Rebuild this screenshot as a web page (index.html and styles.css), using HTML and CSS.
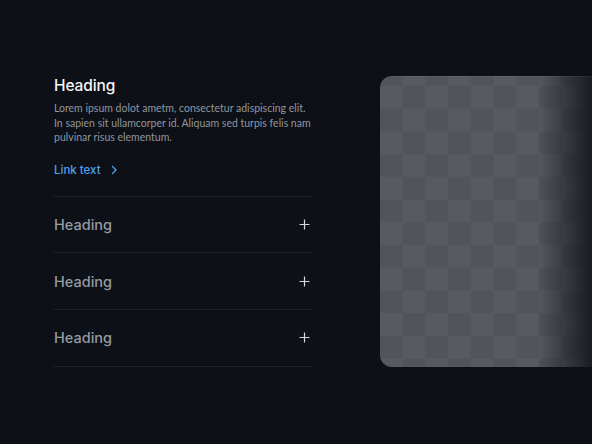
FILE: index.html
```html
<!DOCTYPE html>
<html>
<head>
<meta charset="utf-8">
<link rel="stylesheet" href="styles.css">
</head>
<body>
<main class="section">
  <div class="content">
    <h2 class="title">Heading</h2>
    <p class="text">Lorem ipsum dolot ametm, consectetur adispiscing elit. In sapien sit ullamcorper id. Aliquam sed turpis felis nam pulvinar risus elementum.</p>
    <a class="link" href="#">Link text
      <svg class="chev" width="8" height="10" viewBox="0 0 8 10"><path d="M2.5 1.5 L6 5 L2.5 8.5" fill="none" stroke="currentColor" stroke-width="1.3" stroke-linecap="round" stroke-linejoin="round"/></svg>
    </a>
    <ul class="list">
      <li class="item"><span>Heading</span><svg class="plus" width="11" height="11" viewBox="0 0 11 11"><path d="M5.5 0.5 V10.5 M0.5 5.5 H10.5" stroke="currentColor" stroke-width="1.2"/></svg></li>
      <li class="item"><span>Heading</span><svg class="plus" width="11" height="11" viewBox="0 0 11 11"><path d="M5.5 0.5 V10.5 M0.5 5.5 H10.5" stroke="currentColor" stroke-width="1.2"/></svg></li>
      <li class="item"><span>Heading</span><svg class="plus" width="11" height="11" viewBox="0 0 11 11"><path d="M5.5 0.5 V10.5 M0.5 5.5 H10.5" stroke="currentColor" stroke-width="1.2"/></svg></li>
    </ul>
  </div>
  <div class="media"></div>
</main>
</body>
</html>
```
FILE: styles.css
```css
* { box-sizing: border-box; }
html, body { margin: 0; padding: 0; }
body {
  background: #0d1017;
  font-family: Inter, "Noto Sans", sans-serif;
  width: 592px;
  height: 444px;
  overflow: hidden;
}
.section {
  display: flex;
  align-items: flex-start;
  padding: 76px 0 0 54px;
}
.content {
  width: 258px;
  flex: none;
}
.title {
  margin: 0;
  font-size: 15.5px;
  line-height: 20px;
  font-weight: 500;
  color: #f4f5f7;
  letter-spacing: -0.1px;
}
.text {
  margin: 5px 0 0;
  font-family: Lato, "Noto Sans", sans-serif;
  font-size: 10.5px;
  line-height: 14.5px;
  color: #92969e;
}
.link {
  display: flex;
  align-items: center;
  gap: 9px;
  margin-top: 17px;
  height: 16px;
  font-size: 11.5px;
  font-weight: 500;
  color: #4ea3ee;
  text-decoration: none;
}
.chev { display: block; }
.list {
  list-style: none;
  margin: 18px 0 0;
  padding: 0;
  border-top: 1px solid #1f232b;
}
.item {
  display: flex;
  align-items: center;
  justify-content: space-between;
  height: 56.7px;
  padding-right: 2px;
  border-bottom: 1px solid #1f232b;
  font-size: 14.5px;
  font-weight: 500;
  color: #969ba3;
}
.plus { color: #d6d8dc; display: block; }
.media {
  margin-left: 68px;
  flex: 1;
  height: 291px;
  border-radius: 12px 0 0 12px;
  background:
    linear-gradient(to right, rgba(13,16,23,0) 0, rgba(13,16,23,0) 74%, rgba(18,21,27,0.9) 100%),
    repeating-conic-gradient(#51555b 0 25%, #575b61 0 50%) 0 10px / 45.4px 45.4px;
  box-shadow: inset 0 1px 0 rgba(255,255,255,0.06);
}
```
